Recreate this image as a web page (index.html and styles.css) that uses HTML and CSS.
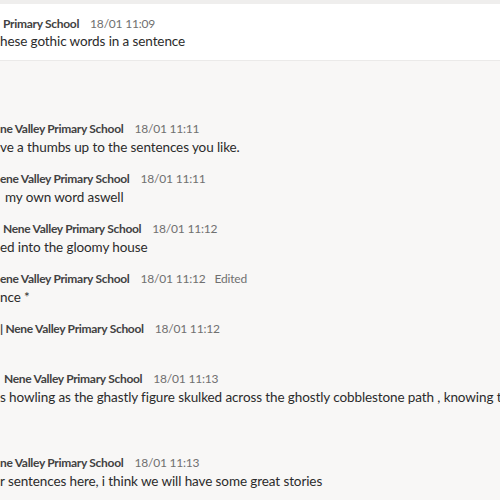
FILE: index.html
```html
<!DOCTYPE html>
<html>
<head>
<meta charset="utf-8">
<link rel="stylesheet" href="styles.css">
</head>
<body>
<div class="card">
  <div class="head pad3"><span class="name">Primary School</span><span class="time">18/01 11:09</span></div>
  <div class="msg">hese gothic words in a sentence</div>
</div>
<div class="replies">
  <div class="reply">
    <div class="head"><span class="name">ne Valley Primary School</span><span class="time">18/01 11:11</span></div>
    <div class="msg">ve a thumbs up to the sentences you like.</div>
  </div>
  <div class="reply">
    <div class="head"><span class="name">ene Valley Primary School</span><span class="time">18/01 11:11</span></div>
    <div class="msg pad5">my own word aswell</div>
  </div>
  <div class="reply">
    <div class="head pad3"><span class="name">Nene Valley Primary School</span><span class="time">18/01 11:12</span></div>
    <div class="msg">ed into the gloomy house</div>
  </div>
  <div class="reply">
    <div class="head"><span class="name">ene Valley Primary School</span><span class="time">18/01 11:12</span><span class="time edited">Edited</span></div>
    <div class="msg">nce *</div>
  </div>
  <div class="reply">
    <div class="head"><span class="name">| Nene Valley Primary School</span><span class="time">18/01 11:12</span></div>
    <div class="msg"></div>
  </div>
  <div class="reply tall">
    <div class="head pad4"><span class="name">Nene Valley Primary School</span><span class="time">18/01 11:13</span></div>
    <div class="msg">s howling as the ghastly figure skulked across the ghostly cobblestone path , knowing t</div>
  </div>
  <div class="reply">
    <div class="head"><span class="name">ne Valley Primary School</span><span class="time">18/01 11:13</span></div>
    <div class="msg">r sentences here, i think we will have some great stories</div>
  </div>
</div>
</body>
</html>
```
FILE: styles.css
```css
html, body {
  margin: 0;
  height: 500px;
  overflow: hidden;
}
body {
  background: #f8f7f6;
  font-family: "Lato", "Open Sans", sans-serif;
  color: #252423;
}
.card {
  background: #ffffff;
  border-top: 4px solid #efeeed;
  border-bottom: 1px solid #ebeae9;
  height: 61px;
  box-sizing: border-box;
  padding-top: 12px;
}
.card .msg {
  margin-top: -1px;
}
.head {
  display: flex;
  gap: 11px;
  height: 16px;
  line-height: 16px;
  white-space: nowrap;
}
.name {
  font-size: 12px;
  font-weight: 700;
  letter-spacing: -0.3px;
  color: #424242;
}
.time {
  font-size: 12px;
  letter-spacing: -0.2px;
  color: #707070;
}
.edited {
  margin-left: -2px;
}
.msg {
  font-size: 13.5px;
  letter-spacing: -0.1px;
  line-height: 20px;
  height: 20px;
  white-space: nowrap;
  color: #2b2b2b;
}
.replies {
  padding-top: 60px;
  display: flex;
  flex-direction: column;
  gap: 14px;
}
.reply.tall {
  margin-bottom: 34px;
}
.pad3 { padding-left: 3px; }
.pad4 { padding-left: 4px; }
.pad5 { padding-left: 5px; }
```
